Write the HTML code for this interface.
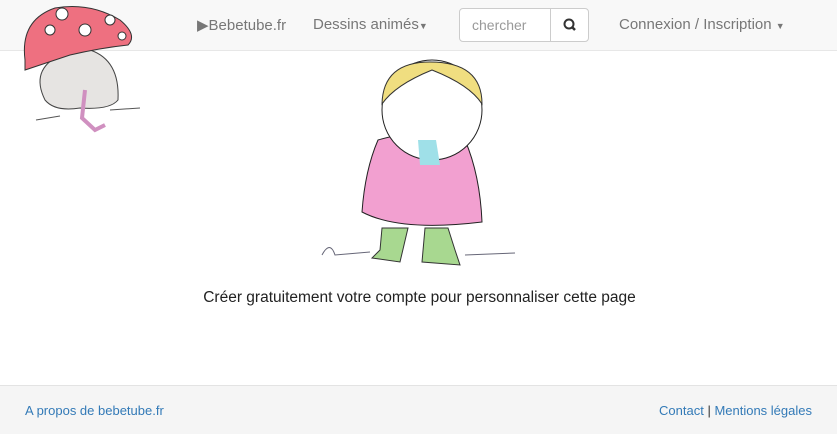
<!DOCTYPE html>
<html><head><meta charset="utf-8"><style>
body{margin:0;width:837px;height:433px;overflow:hidden;background:#fff;font-family:"Liberation Sans",sans-serif;position:relative}
.nav{position:absolute;top:0;left:0;width:837px;height:50px;background:#f8f8f8;border-bottom:1px solid #e7e7e7}
.nav span{position:absolute;top:16px;font-size:15px;color:#777}
.search{position:absolute;left:459px;top:8px;width:128px;height:32px;border:1px solid #ccc;border-radius:4px;background:#fff}
.search .in{position:absolute;left:12px;top:8px;color:#999;font-size:14px}
.search .btn{position:absolute;left:90px;top:0;width:38px;height:32px;border-left:1px solid #ccc}
.foot{position:absolute;top:385px;left:0;width:837px;height:48px;background:#f5f5f5;border-top:1px solid #e3e3e3;font-size:13px}
.foot a{color:#337ab7;text-decoration:none}
.txt{position:absolute;top:289px;left:0;width:837px;text-align:center;font-size:15.5px;color:#222;padding-left:1px}
svg{position:absolute;left:0;top:0}
</style></head><body>
<div class="nav">
<span style="left:197px">▶Bebetube.fr</span>
<span style="left:313px">Dessins animés<small style="font-size:9px">▼</small></span>
<div class="search"><div class="in">chercher</div><div class="btn"><svg width="38" height="32" viewBox="0 0 38 32"><circle cx="18" cy="15" r="4.5" fill="none" stroke="#333" stroke-width="2"/><line x1="21" y1="18" x2="24" y2="21" stroke="#333" stroke-width="2.5"/></svg></div></div>
<span style="left:619px">Connexion / Inscription <small style="font-size:9px">▼</small></span>
</div>
<svg width="837" height="433">
<path d="M45 100 Q30 70 60 55 L90 50 Q120 60 118 100 Q110 110 80 108 Q55 112 45 100Z" fill="#e6e4e2" stroke="#444" stroke-width="1"/>
<path d="M25 60 Q20 20 55 8 Q90 2 120 20 Q138 35 128 45 Q100 48 70 55 Q40 65 25 70Z" fill="#ee7080" stroke="#333" stroke-width="1"/>
<circle cx="62" cy="14" r="6" fill="#fff" stroke="#333"/><circle cx="85" cy="30" r="6" fill="#fff" stroke="#333"/><circle cx="50" cy="30" r="5" fill="#fff" stroke="#333"/><circle cx="110" cy="20" r="5" fill="#fff" stroke="#333"/><circle cx="122" cy="36" r="4" fill="#fff" stroke="#333"/>
<path d="M85 90 L82 118 L95 130 L105 125" fill="none" stroke="#d090c0" stroke-width="4"/>
<path d="M36 120 L60 116 M110 110 L140 108" stroke="#555"/>
<path d="M322 255 Q330 240 335 255 L370 252 M465 255 L515 253" fill="none" stroke="#667" stroke-width="1"/>
<path d="M382 228 L380 250 L372 258 L400 262 L408 228Z M425 228 L422 262 L460 265 L455 250 L448 228Z" fill="#a8d890" stroke="#333"/>
<path d="M378 140 Q365 170 362 212 Q400 232 482 222 Q480 175 465 140 Q430 125 378 140Z" fill="#f2a0d0" stroke="#222"/>
<circle cx="432" cy="110" r="50" fill="#fff" stroke="#222"/>
<path d="M382 104 Q383 62 430 62 Q482 62 482 104 Q470 85 432 70 Q395 85 382 104Z" fill="#f0de80" stroke="#333"/>
<path d="M418 140 L420 165 L440 165 L436 140Z" fill="#9fe0e8"/>
</svg>
<div class="txt">Créer gratuitement votre compte pour personnaliser cette page</div>
<div class="foot"><a style="position:absolute;left:25px;top:17px">A propos de bebetube.fr</a><span style="position:absolute;right:25px;top:17px;color:#333"><a>Contact</a> | <a>Mentions légales</a></span></div>
</body></html>
